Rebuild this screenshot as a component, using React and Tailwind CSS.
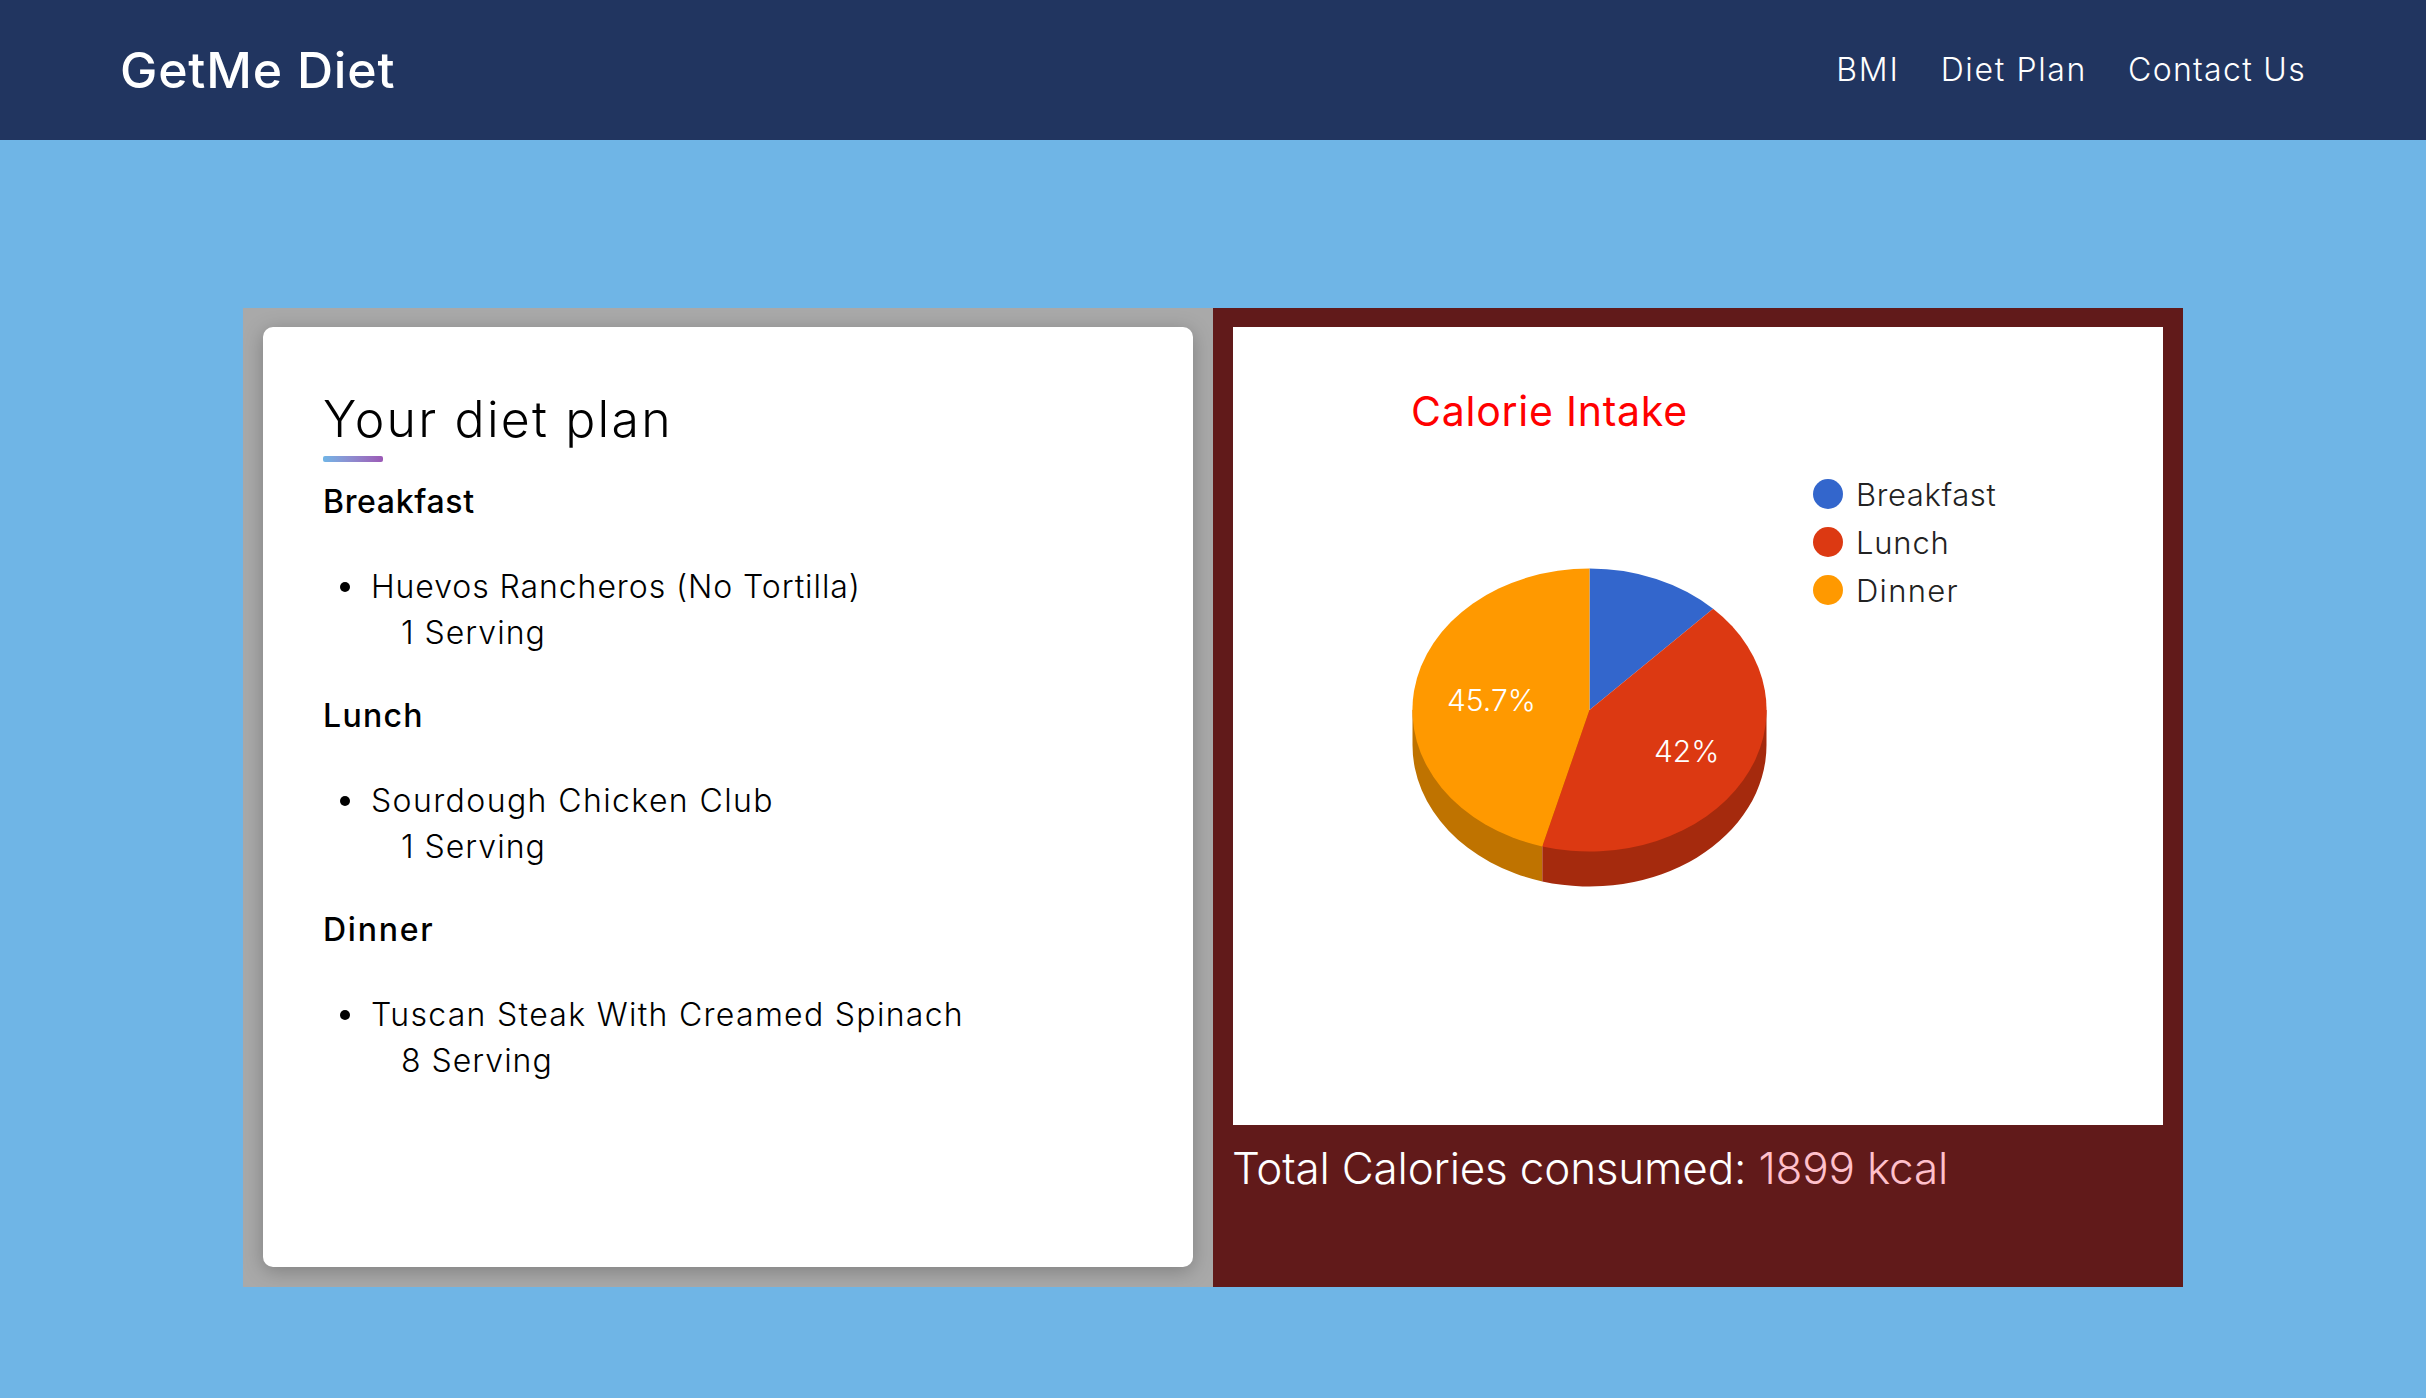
import React from "react";

const meals = [
  {
    name: "Breakfast",
    nameClass: "tracking-[0.65px]",
    item: "Huevos Rancheros (No Tortilla)",
    itemClass: "tracking-[0.92px]",
    serving: "1 Serving",
  },
  {
    name: "Lunch",
    nameClass: "tracking-[1.3px]",
    item: "Sourdough Chicken Club",
    itemClass: "tracking-[1.4px]",
    serving: "1 Serving",
  },
  {
    name: "Dinner",
    nameClass: "tracking-[1.75px]",
    item: "Tuscan Steak With Creamed Spinach",
    itemClass: "tracking-[1.3px]",
    serving: "8 Serving",
  },
];

const legend = [
  { name: "Breakfast", color: "#3366cc", y: 167, spacing: 0.6 },
  { name: "Lunch", color: "#dc3912", y: 215, spacing: 0.8 },
  { name: "Dinner", color: "#ff9900", y: 263, spacing: 1.3 },
];

const PieChart = () => (
  <svg width="930" height="798" viewBox="0 0 930 798" className="block" fontFamily="Inter, sans-serif">
    <text x="178" y="99" fontSize="41" fontWeight="400" fill="#ff0000" letterSpacing="0.75">
      Calorie Intake
    </text>

    {legend.map((l) => (
      <g key={l.name}>
        <circle cx="595" cy={l.y} r="15" fill={l.color} />
        <text x="623" y={l.y + 12} fontSize="31" fontWeight="300" fill="#222222" letterSpacing={l.spacing}>
          {l.name}
        </text>
      </g>
    ))}

    {/* pie sides, run up under the top so no seam shows */}
    <path d="M179.5 383 L179.5 418 A177 141.5 0 0 0 309.3 554.4 L309.3 383 Z" fill="#bf7300" />
    <path d="M309.3 383 L309.3 554.4 A177 141.5 0 0 0 533.5 418 L533.5 383 Z" fill="#a52a0d" />

    {/* pie top */}
    <path d="M356.5 383 L356.5 241.5 A177 141.5 0 0 1 480.1 281.7 Z" fill="#3366cc" />
    <path d="M356.5 383 L480.1 281.7 A177 141.5 0 0 1 309.3 519.4 Z" fill="#dc3912" />
    <path d="M356.5 383 L309.3 519.4 A177 141.5 0 0 1 356.5 241.5 Z" fill="#ff9900" />

    <text x="214" y="384" fontSize="30" fontWeight="300" fill="#ffffff">45.7%</text>
    <text x="421" y="435" fontSize="30" fontWeight="300" fill="#ffffff">42%</text>
  </svg>
);

const App = () => {
  return (
    <div className="min-h-screen bg-[#6fb5e6] font-['Inter',sans-serif]">
      <header className="flex h-[140px] items-center justify-between bg-[#213560] px-[120px] text-white">
        <div className="text-[50px] font-medium tracking-[0.8px]">GetMe Diet</div>
        <nav className="flex gap-[41px] text-[32px] font-light">
          <a className="tracking-[1.8px]">BMI</a>
          <a className="tracking-[1.65px]">Diet Plan</a>
          <a className="tracking-[1.3px]">Contact Us</a>
        </nav>
      </header>

      <main className="mx-auto mt-[168px] flex h-[979px] w-[1940px]">
        <section className="w-[970px] overflow-hidden bg-[#a9a9a9] px-[20px] pt-[19px] pb-[20px]">
          <div className="h-full rounded-[10px] bg-white px-[60px] pt-[58px] text-black shadow-[0_4px_20px_rgba(0,0,0,0.25)]">
            <h2 className="text-[50px] leading-[68px] font-light tracking-[2.2px]">Your diet plan</h2>
            <div className="mt-[3px] h-[6px] w-[60px] rounded-[2px] bg-gradient-to-r from-[#6fb5e6] to-[#9b59b6]" />
            {meals.map((m) => (
              <div key={m.name} className="h-[214px] pt-[17px]">
                <h3 className={`text-[32px] leading-[46px] font-medium ${m.nameClass}`}>{m.name}</h3>
                <ul className="mt-[39px] pl-[17px] text-[32px] leading-[46px] font-light">
                  <li className="flex">
                    <span className="mt-[18px] h-[10px] w-[10px] shrink-0 rounded-full bg-black" />
                    <div className="pl-[21px]">
                      <span className={`block ${m.itemClass}`}>{m.item}</span>
                      <span className="block pl-[30px] tracking-[1px]">{m.serving}</span>
                    </div>
                  </li>
                </ul>
              </div>
            ))}
          </div>
        </section>

        <section className="w-[970px] bg-[#611a1a] px-[20px] pt-[19px]">
          <div className="h-[798px] bg-white">
            <PieChart />
          </div>
          <p className="mt-[13px] -ml-[1px] text-[44px] leading-[60px] font-light tracking-[-0.18px] text-white">
            Total Calories consumed: <span className="text-[#ffc0cb]">1899 kcal</span>
          </p>
        </section>
      </main>
    </div>
  );
};

export default App;
